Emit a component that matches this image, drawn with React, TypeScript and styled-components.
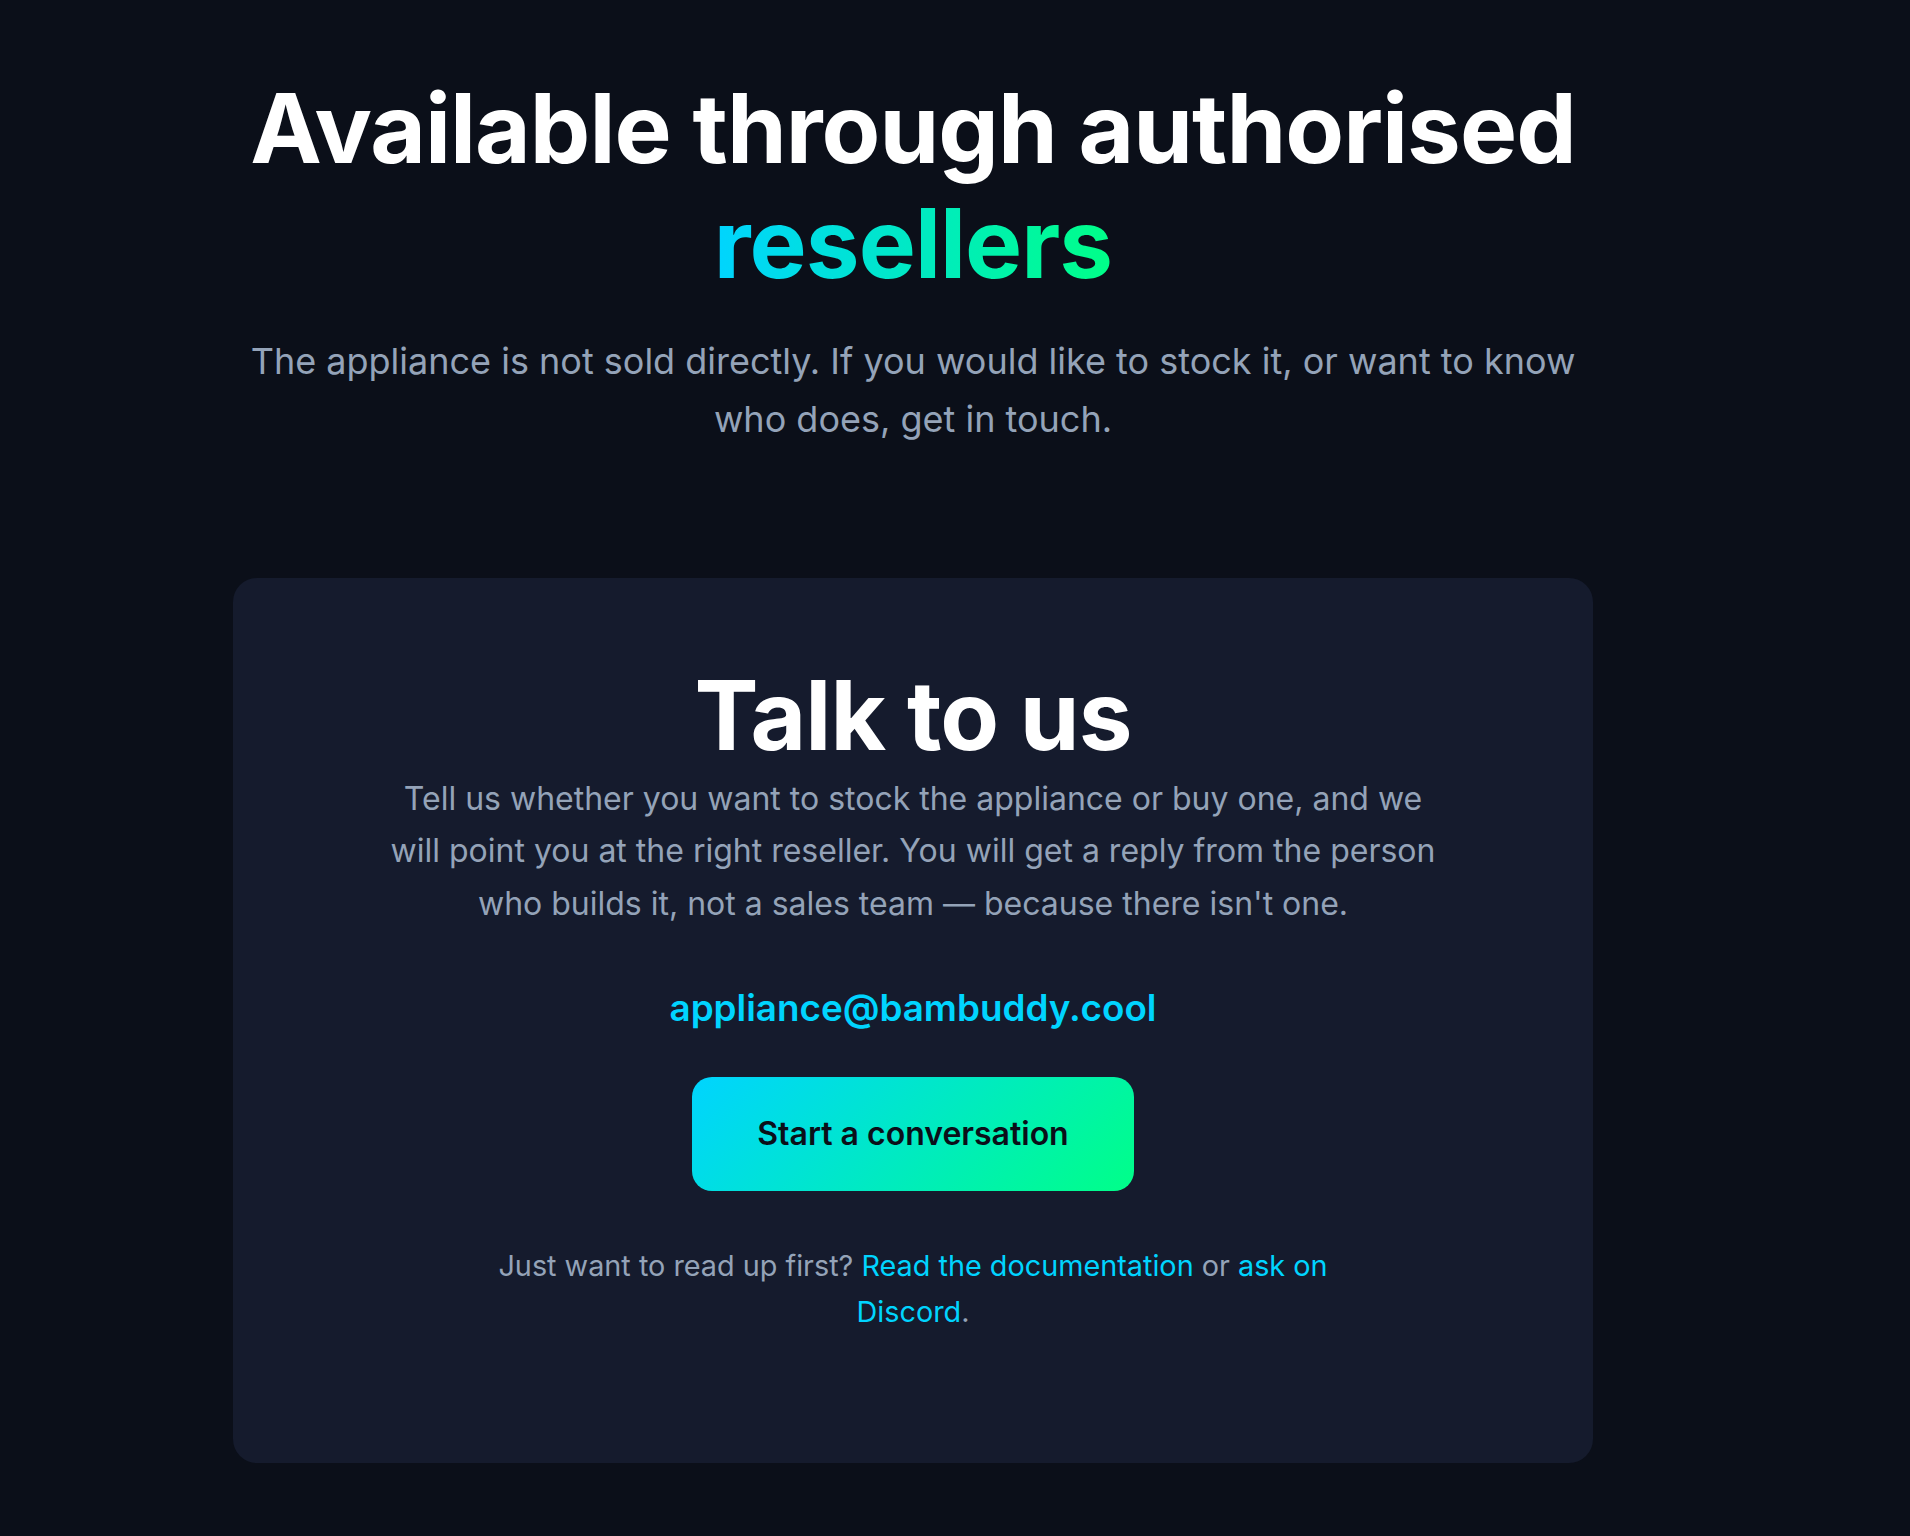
import styled, { createGlobalStyle } from 'styled-components'

const GlobalStyle = createGlobalStyle`
  html, body {
    margin: 0;
    padding: 0;
    background: #0b0f19;
  }

  body {
    font-family: Inter, 'Noto Sans', 'Liberation Sans', sans-serif;
    -webkit-font-smoothing: antialiased;
  }
`

const Page = styled.main`
  min-height: 100vh;
  box-sizing: border-box;
  padding: 71px 317px 0 233px;
  background: #0b0f19;
  display: flex;
  flex-direction: column;
  align-items: center;
`

const Hero = styled.section`
  width: 100%;
  display: flex;
  flex-direction: column;
  align-items: center;
  text-align: center;
  gap: 32px;
`

const Title = styled.h1`
  margin: 0;
  font-size: 96px;
  line-height: 1.2;
  font-weight: 700;
  letter-spacing: -0.01em;
  color: #ffffff;
`

const GradientText = styled.span`
  background: linear-gradient(90deg, #00d4ff 0%, #00ff88 100%);
  -webkit-background-clip: text;
  background-clip: text;
  color: transparent;
`

const Lead = styled.p`
  margin: 0;
  font-size: 36px;
  line-height: 1.6;
  color: #94a3b8;
`

const Card = styled.section`
  box-sizing: border-box;
  width: 100%;
  margin-top: 129px;
  padding: 80px 64px 128px;
  background: #151b2d;
  border-radius: 24px;
  display: flex;
  flex-direction: column;
  align-items: center;
  text-align: center;
`

const CardTitle = styled.h2`
  margin: 0;
  font-size: 96px;
  line-height: 1.2;
  font-weight: 700;
  letter-spacing: -0.01em;
  color: #ffffff;
`

const CardText = styled.p`
  margin: 0;
  max-width: 1058px;
  font-size: 32px;
  line-height: 1.64;
  color: #94a3b8;
`

const Email = styled.a`
  margin-top: 49px;
  font-size: 36.8px;
  line-height: 1.6;
  font-weight: 600;
  color: #00d4ff;
  text-decoration: none;
`

const CtaButton = styled.a`
  margin-top: 39px;
  padding: 33px 65px;
  border-radius: 20px;
  background: linear-gradient(135deg, #00d4ff 0%, #00ff88 100%);
  color: #0b0f19;
  font-size: 32px;
  line-height: 48px;
  font-weight: 600;
  text-decoration: none;
`

const Note = styled.p`
  margin: 52px 0 0;
  max-width: 880px;
  font-size: 28.8px;
  line-height: 46px;
  color: #94a3b8;
`

const NoteLink = styled.a`
  color: #00d4ff;
  text-decoration: none;
`

function App() {
  return (
    <>
      <GlobalStyle />
      <Page>
        <Hero>
          <Title>
            Available through authorised <GradientText>resellers</GradientText>
          </Title>
          <Lead>
            The appliance is not sold directly. If you would like to stock it, or want to know who
            does, get in touch.
          </Lead>
        </Hero>

        <Card>
          <CardTitle>Talk to us</CardTitle>
          <CardText>
            Tell us whether you want to stock the appliance or buy one, and we will point you at the
            right reseller. You will get a reply from the person who builds it, not a sales team —
            because there isn't one.
          </CardText>
          <Email href='mailto:appliance@bambuddy.cool'>appliance@bambuddy.cool</Email>
          <CtaButton href='mailto:appliance@bambuddy.cool'>Start a conversation</CtaButton>
          <Note>
            Just want to read up first? <NoteLink href='#docs'>Read the documentation</NoteLink> or{' '}
            <NoteLink href='#discord'>ask on Discord</NoteLink>.
          </Note>
        </Card>
      </Page>
    </>
  )
}

export default App
